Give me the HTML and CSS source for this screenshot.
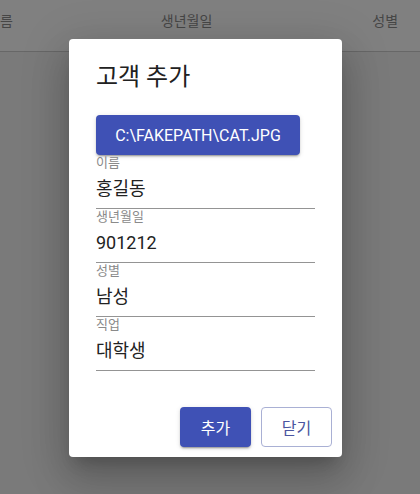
FILE: index.html
```html
<!DOCTYPE html>
<html lang="ko">
<head>
<meta charset="utf-8">
<title>고객 추가</title>
<link rel="stylesheet" href="styles.css">
</head>
<body>
<div class="page">
  <div class="table-head">
    <span class="th th-name">이름</span>
    <span class="th th-birth">생년월일</span>
    <span class="th th-gender">성별</span>
  </div>
  <div class="table-body"></div>
</div>
<div class="dialog">
  <h2 class="dialog-title">고객 추가</h2>
  <div class="dialog-content">
    <button class="btn btn-contained btn-file">C:\FAKEPATH\CAT.JPG</button>
    <div class="field">
      <label class="field-label">이름</label>
      <div class="field-input">홍길동</div>
    </div>
    <div class="field">
      <label class="field-label">생년월일</label>
      <div class="field-input">901212</div>
    </div>
    <div class="field">
      <label class="field-label">성별</label>
      <div class="field-input">남성</div>
    </div>
    <div class="field">
      <label class="field-label">직업</label>
      <div class="field-input">대학생</div>
    </div>
  </div>
  <div class="dialog-actions">
    <button class="btn btn-contained btn-action">추가</button>
    <button class="btn btn-outlined btn-action">닫기</button>
  </div>
</div>
</body>
</html>
```

FILE: styles.css
```css
* { box-sizing: border-box; }
html, body {
  margin: 0;
  padding: 0;
  width: 420px;
  height: 494px;
  overflow: hidden;
  background: #7f7f7f;
  font-family: Roboto, "Noto Sans CJK KR", sans-serif;
}
.page {
  width: 420px;
  height: 494px;
  display: flex;
  flex-direction: column;
}
.table-head {
  height: 52px;
  display: flex;
  align-items: center;
  margin-left: -13px;
  background: #808080;
  border-bottom: 1px solid #676767;
  box-shadow: 0 1px 2px rgba(0,0,0,0.25);
  color: #464646;
  font-size: 14px;
  padding-bottom: 12px;
}
.th { white-space: nowrap; }
.th-birth { margin-left: 148px; }
.th-gender { margin-left: 160px; }
.table-body {
  flex: 1;
  background: #7a7a7a;
}
.dialog {
  position: absolute;
  left: 69px;
  top: 39px;
  width: 273px;
  height: 418px;
  background: #fff;
  border-radius: 4px;
  box-shadow: 0 11px 15px -7px rgba(0,0,0,0.2), 0 24px 38px 3px rgba(0,0,0,0.14), 0 9px 46px 8px rgba(0,0,0,0.12);
  display: flex;
  flex-direction: column;
}
.dialog-title {
  margin: 0;
  padding: 20px 27px 0;
  height: 56px;
  line-height: 36px;
  font-size: 24px;
  font-weight: 400;
  color: #212121;
}
.dialog-content {
  padding: 20px 27px 0;
  display: flex;
  flex-direction: column;
  align-items: flex-start;
  flex: 1;
}
.btn {
  font-family: Roboto, "Noto Sans CJK KR", sans-serif;
  border-radius: 4px;
  cursor: pointer;
  height: 40px;
}
.btn-contained {
  background: #3f51b5;
  color: #fff;
  border: none;
  box-shadow: 0 3px 1px -2px rgba(0,0,0,0.2), 0 2px 2px 0 rgba(0,0,0,0.14), 0 1px 5px 0 rgba(0,0,0,0.12);
}
.btn-outlined {
  background: #fff;
  color: #4a55a0;
  border: 1px solid #a9b0d4;
}
.btn-file {
  width: 204px;
  font-size: 16px;
  padding: 0 10px;
}
.field {
  width: 100%;
  display: flex;
  flex-direction: column;
  border-bottom: 1px solid #949494;
}
.field-label {
  height: 15px;
  line-height: 15px;
  font-size: 13px;
  color: #8a8a8a;
}
.field-input {
  height: 38px;
  line-height: 38px;
  font-size: 18px;
  color: #222;
}
.dialog-actions {
  display: flex;
  justify-content: flex-end;
  gap: 10px;
  padding: 0 10px 10px;
}
.btn-action {
  width: 71px;
  font-size: 16px;
  padding: 0;
}
```
